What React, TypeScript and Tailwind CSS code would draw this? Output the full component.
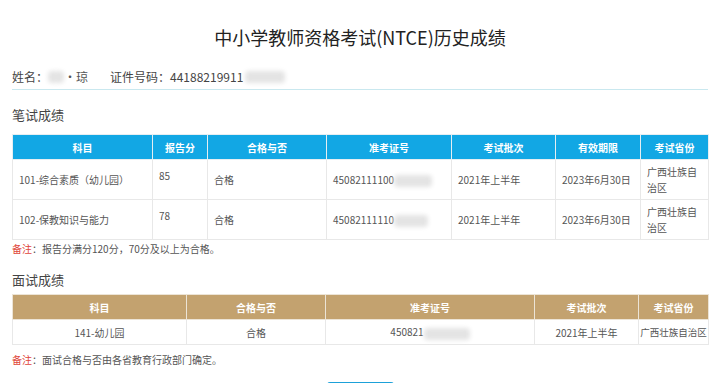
import React from "react";

const font = { fontFamily: '"Noto Sans CJK SC", "Noto Sans", sans-serif' };

const Blur = ({ w, className = "" }: { w: string; className?: string }) => (
  <span className={`inline-block align-middle h-[12px] rounded-sm bg-[#e4e4e4] blur-[2px] ${w} ${className}`} />
);

const written = [
  { subject: "101-综合素质（幼儿园）", score: "85", id: "45082111100", w: "w-[38px]" },
  { subject: "102-保教知识与能力", score: "78", id: "45082111110", w: "w-[34px]" },
];

export default function App() {
  return (
    <div style={font} className="w-[720px] h-[383px] overflow-hidden bg-white text-[#333]">
      <h1 className="pt-[25px] text-center text-[18px] leading-[24px] text-[#222]">
        中小学教师资格考试(NTCE)历史成绩
      </h1>

      <div className="mx-[12px] mt-[15px] flex items-center h-[26px] border-b border-[#c9e8ef] text-[12px] text-[#444]">
        <span>姓名：</span>
        <Blur w="w-[16px]" />
        <span className="text-[#555]">·琼</span>
        <span className="ml-[22px]">证件号码：44188219911</span>
        <Blur w="w-[40px]" className="ml-[2px]" />
      </div>

      <div className="mx-[12px] mt-[16px] text-[13px] leading-[18px] text-[#444]">笔试成绩</div>

      <table className="mx-[12px] mt-[10px] w-[696px] table-fixed border-collapse text-[10px] text-[#555]">
        <colgroup>
          <col className="w-[140px]" />
          <col className="w-[55px]" />
          <col className="w-[119px]" />
          <col className="w-[125px]" />
          <col className="w-[104px]" />
          <col className="w-[85px]" />
          <col className="w-[68px]" />
        </colgroup>
        <thead>
          <tr className="h-[25px] bg-[#12a7e4] text-white font-bold text-[10px]">
            {["科目", "报告分", "合格与否", "准考证号", "考试批次", "有效期限", "考试省份"].map((h) => (
              <th key={h} className="border border-[#e6eef2] font-bold">{h}</th>
            ))}
          </tr>
        </thead>
        <tbody>
          {written.map((r) => (
            <tr key={r.subject} className="h-[40px]">
              <td className="border border-[#e8e8e8] px-[6px]">{r.subject}</td>
              <td className="border border-[#e8e8e8] px-[6px] pb-[8px]">{r.score}</td>
              <td className="border border-[#e8e8e8] px-[6px]">合格</td>
              <td className="border border-[#e8e8e8] px-[6px] whitespace-nowrap">
                {r.id}
                <Blur w={r.w} />
              </td>
              <td className="border border-[#e8e8e8] px-[6px]">2021年上半年</td>
              <td className="border border-[#e8e8e8] px-[6px]">2023年6月30日</td>
              <td className="border border-[#e8e8e8] px-[6px] leading-[16px]">广西壮族自治区</td>
            </tr>
          ))}
        </tbody>
      </table>

      <div className="mx-[12px] mt-[2px] text-[10px] leading-[14px] text-[#555]">
        <span className="text-[#e0453a]">备注</span>：报告分满分120分，70分及以上为合格。
      </div>

      <div className="mx-[12px] mt-[15px] text-[13px] leading-[18px] text-[#444]">面试成绩</div>

      <table className="mx-[12px] mt-[5px] w-[696px] table-fixed border-collapse text-[10px] text-[#555] text-center">
        <colgroup>
          <col className="w-[174px]" />
          <col className="w-[139px]" />
          <col className="w-[209px]" />
          <col className="w-[104px]" />
          <col className="w-[70px]" />
        </colgroup>
        <thead>
          <tr className="h-[25px] bg-[#c3a26f] text-white">
            {["科目", "合格与否", "准考证号", "考试批次", "考试省份"].map((h) => (
              <th key={h} className="border border-[#ece4d6] font-bold">{h}</th>
            ))}
          </tr>
        </thead>
        <tbody>
          <tr className="h-[25px]">
            <td className="border border-[#e8e8e8]">141-幼儿园</td>
            <td className="border border-[#e8e8e8]">合格</td>
            <td className="border border-[#e8e8e8] whitespace-nowrap">
              450821
              <Blur w="w-[46px]" />
            </td>
            <td className="border border-[#e8e8e8]">2021年上半年</td>
            <td className="border border-[#e8e8e8] whitespace-nowrap text-[9.5px]">广西壮族自治区</td>
          </tr>
        </tbody>
      </table>

      <div className="mx-[12px] mt-[8px] text-[10px] leading-[14px] text-[#555]">
        <span className="text-[#e0453a]">备注</span>：面试合格与否由各省教育行政部门确定。
      </div>

      <div className="mt-[15px] flex justify-center">
        <button className="w-[67px] h-[20px] rounded-t-[3px] bg-[#1da1d9]" />
      </div>
    </div>
  );
}
